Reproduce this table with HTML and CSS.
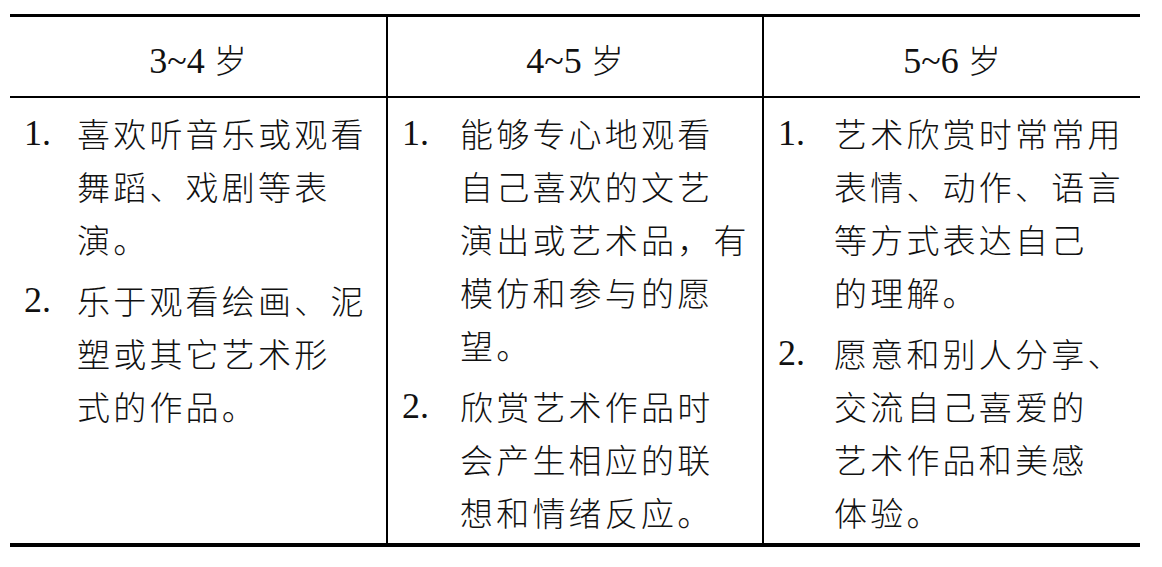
FILE: index.html
```html
<!DOCTYPE html>
<html lang="zh-CN">
<head>
<meta charset="utf-8">
<title>艺术欣赏目标</title>
<link rel="stylesheet" href="styles.css">
</head>
<body>
<div class="table">
  <div class="head h1"><span class="num">3~4</span> <span class="cjk">岁</span></div>
  <div class="head h2 divided"><span class="num">4~5</span> <span class="cjk">岁</span></div>
  <div class="head h3 divided"><span class="num">5~6</span> <span class="cjk">岁</span></div>

  <div class="cell c1">
    <div class="item">
      <span class="mark">1.</span>
      <div class="text"><span class="line">喜欢听音乐或观看</span><span class="line">舞蹈、戏剧等表</span><span class="line">演。</span></div>
    </div>
    <div class="item">
      <span class="mark">2.</span>
      <div class="text"><span class="line">乐于观看绘画、泥</span><span class="line">塑或其它艺术形</span><span class="line">式的作品。</span></div>
    </div>
  </div>

  <div class="cell c2 divided">
    <div class="item">
      <span class="mark">1.</span>
      <div class="text"><span class="line">能够专心地观看</span><span class="line">自己喜欢的文艺</span><span class="line">演出或艺术品，有</span><span class="line">模仿和参与的愿</span><span class="line">望。</span></div>
    </div>
    <div class="item">
      <span class="mark">2.</span>
      <div class="text"><span class="line">欣赏艺术作品时</span><span class="line">会产生相应的联</span><span class="line">想和情绪反应。</span></div>
    </div>
  </div>

  <div class="cell c3 divided">
    <div class="item">
      <span class="mark">1.</span>
      <div class="text"><span class="line">艺术欣赏时常常用</span><span class="line">表情、动作、语言</span><span class="line">等方式表达自己</span><span class="line">的理解。</span></div>
    </div>
    <div class="item">
      <span class="mark">2.</span>
      <div class="text"><span class="line">愿意和别人分享、</span><span class="line">交流自己喜爱的</span><span class="line">艺术作品和美感</span><span class="line">体验。</span></div>
    </div>
  </div>
</div>
</body>
</html>
```

FILE: styles.css
```css
html, body {
  margin: 0;
  padding: 0;
  background: #ffffff;
}

body {
  padding: 14px 0 0 10px;
  color: #111111;
  font-family: "Liberation Serif", "Noto Sans CJK SC", serif;
}

.table {
  width: 1130px;
  display: grid;
  grid-template-columns: 376px 376px 378px;
  border-top: 3px solid #000;
  border-bottom: 4px solid #000;
}

.divided {
  border-left: 2px solid #000;
}

.head {
  box-sizing: border-box;
  height: 81px;
  padding-top: 6px;
  border-bottom: 2px solid #000;
  text-align: center;
  font-size: 36px;
  line-height: 73px;
  white-space: nowrap;
  overflow: hidden;
}

.head .num {
  font-family: "Liberation Serif", serif;
}

.head .cjk {
  font-family: "Noto Sans CJK SC", sans-serif;
  font-weight: 300;
  font-size: 33px;
}

.cell {
  box-sizing: border-box;
  padding: 9px 0 4px 14px;
  display: flex;
  flex-direction: column;
  gap: 8px;
}

.item {
  display: flex;
  align-items: flex-start;
}

.mark {
  flex: none;
  font-family: "Liberation Serif", serif;
  font-size: 36px;
  line-height: 53px;
  height: 53px;
}

.c1 .mark { width: 53px; }
.c2 .mark { width: 58px; }
.c3 .mark { width: 56px; }

.text {
  display: flex;
  flex-direction: column;
  font-family: "Noto Sans CJK SC", sans-serif;
  font-weight: 300;
  font-size: 33px;
  letter-spacing: 3.2px;
}

.line {
  display: block;
  height: 53px;
  line-height: 53px;
  white-space: nowrap;
}
```
